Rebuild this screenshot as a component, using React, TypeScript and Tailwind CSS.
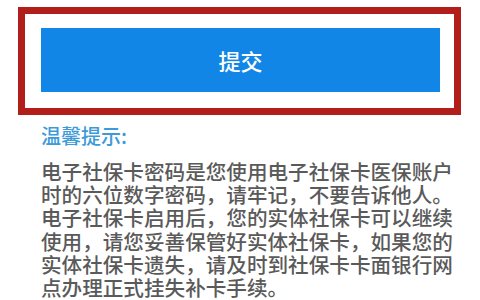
export default function App() {
  const lines = [
    "电子社保卡密码是您使用电子社保卡医保账户",
    "时的六位数字密码，请牢记，不要告诉他人。",
    "电子社保卡启用后，您的实体社保卡可以继续",
    "使用，请您妥善保管好实体社保卡，如果您的",
    "实体社保卡遗失，请及时到社保卡卡面银行网",
    "点办理正式挂失补卡手续。",
  ];
  return (
    <div
      className="w-[480px] h-[300px] bg-white overflow-hidden"
      style={{ fontFamily: '"Noto Sans CJK SC", "Noto Sans", sans-serif' }}
    >
      <div className="pt-[7px] pl-[18px]">
        <div className="w-[443px] h-[108px] border-[7px] border-[#b21f1b] pt-[14px] pl-[16px]">
          <div className="w-[399px] h-[64px] bg-[#1186e6] flex items-center justify-center text-white text-[22px] leading-none font-medium">
            提交
          </div>
        </div>
      </div>
      <div className="pl-[41px] pt-[9px]">
        <div className="text-[#3d9ad8] text-[20px] leading-[24px] whitespace-nowrap font-medium">温馨提示:</div>
        <div className="mt-[12px] text-[#5a5a5a] text-[20.6px] leading-[23.2px] whitespace-nowrap font-medium">
          {lines.map((l, i) => (
            <div key={i}>{l}</div>
          ))}
        </div>
      </div>
    </div>
  );
}
